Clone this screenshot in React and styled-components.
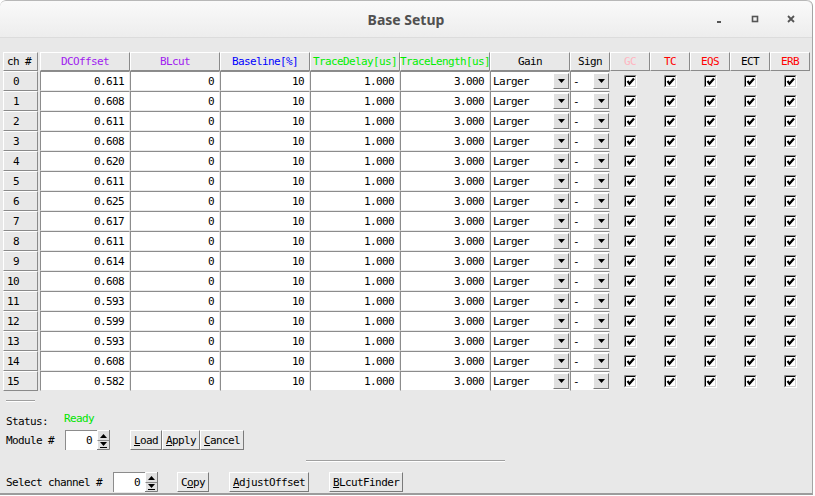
import React from "react";
import styled, { createGlobalStyle } from "styled-components";

const mono = `"DejaVu Sans Mono", "Liberation Mono", monospace`;

const GlobalStyle = createGlobalStyle`
  html, body { margin: 0; padding: 0; background: #ffffff; }
  body { width: 815px; height: 496px; overflow: hidden; }
`;

// window frame
const Window = styled.div`
  width: 813px;
  height: 495px;
  box-sizing: border-box;
  display: flex;
  flex-direction: column;
  background: #e8e8e8;
  border-right: 1px solid #a4a4a4;
  border-bottom: 2px solid #9c9c9c;
  border-radius: 6px 6px 0 0;
  overflow: hidden;
  font-family: ${mono};
  font-size: 11px;
  letter-spacing: -0.62px;
  color: #000;
`;

const TitleBar = styled.div`
  height: 38px;
  flex: none;
  box-sizing: border-box;
  display: grid;
  grid-template-columns: 1fr auto 1fr;
  align-items: center;
  background: linear-gradient(#fafafa, #ededed);
  border-top: 1px solid #b8b8b8;
  border-bottom: 1px solid #dcdcdc;
  border-radius: 6px 6px 0 0;
`;

const Title = styled.div`
  grid-column: 2;
  font-family: "Noto Sans", "Open Sans", sans-serif;
  font-weight: bold;
  font-size: 14px;
  letter-spacing: 0;
  color: #505050;
`;

const Controls = styled.div`
  grid-column: 3;
  justify-self: end;
  display: flex;
  gap: 22px;
  padding-right: 14px;
`;

const Body = styled.div`
  padding: 14px 3px 0 3px;
  display: flex;
  flex-direction: column;
`;

// table
const Grid = styled.div`
  display: grid;
  grid-template-columns: 37px repeat(5, 90px) 80px repeat(6, 40px);
  grid-template-rows: 19px;
  grid-auto-rows: 20px;
`;

const HeadCell = styled.div`
  box-sizing: border-box;
  display: flex;
  align-items: center;
  justify-content: ${(p) => (p.$left ? "flex-start" : "center")};
  padding-left: ${(p) => (p.$left ? "3px" : "0")};
  margin-right: ${(p) => (p.$gap ? "2px" : "0")};
  white-space: pre;
  overflow: visible;
  color: ${(p) => p.$color || "#000"};
  border: 1px solid;
  border-color: #ffffff #8a8a8a #8a8a8a #ffffff;
`;

const Entry = styled.div`
  box-sizing: border-box;
  display: flex;
  align-items: center;
  justify-content: flex-end;
  padding-right: 5px;
  background: #ffffff;
  border-top: 1px solid #8c8c8c;
  border-left: 1px solid #8c8c8c;
  border-right: 1px solid #e8e8e8;
  border-bottom: 1px solid #e8e8e8;
`;

const Combo = styled.div`
  box-sizing: border-box;
  display: flex;
  align-items: stretch;
  background: #ffffff;
  border-top: 1px solid #8c8c8c;
  border-left: 1px solid #8c8c8c;
  border-right: 1px solid #e8e8e8;
  border-bottom: 1px solid #e8e8e8;
`;

const ComboText = styled.div`
  flex: 1;
  display: flex;
  align-items: center;
  padding-left: 2px;
`;

const ArrowButton = styled.div`
  width: 16px;
  box-sizing: border-box;
  margin: 1px 0 1px 0;
  display: flex;
  align-items: center;
  justify-content: center;
  background: #e0e0e0;
  border: 1px solid;
  border-color: #ffffff #7a7a7a #7a7a7a #ffffff;
`;

const CheckCell = styled.div`
  display: flex;
  align-items: center;
  justify-content: center;
`;

// footer
const Footer = styled.div`
  display: flex;
  flex-direction: column;
  padding-left: 6px;
`;

const Rule = styled.div`
  width: ${(p) => p.$width}px;
  margin-top: ${(p) => p.$top}px;
  margin-left: ${(p) => p.$left || 0}px;
  border-top: 1px solid #a0a0a0;
  border-bottom: 1px solid #ffffff;
`;

const Row = styled.div`
  display: flex;
  align-items: ${(p) => p.$align || "center"};
  height: ${(p) => p.$h}px;
  margin-top: ${(p) => p.$top}px;
`;

const Label = styled.span`
  width: ${(p) => p.$width}px;
  flex: none;
  margin-top: ${(p) => p.$shift || 0}px;
  white-space: pre;
`;

const Ready = styled.span`
  color: #00e400;
  margin-top: -3px;
`;

const Spinner = styled.div`
  display: flex;
  height: 20px;
  margin-right: ${(p) => p.$after}px;
`;

const SpinEntry = styled.div`
  width: 32px;
  box-sizing: border-box;
  display: flex;
  align-items: center;
  justify-content: flex-end;
  padding-right: 5px;
  background: #ffffff;
  border-top: 1px solid #8c8c8c;
  border-left: 1px solid #8c8c8c;
`;

const SpinArrows = styled.div`
  width: 13px;
  display: flex;
`;

const ButtonGroup = styled.div`
  display: flex;
`;

const Button = styled.div`
  box-sizing: border-box;
  height: ${(p) => p.$h || 20}px;
  display: flex;
  align-items: center;
  padding: 0 3px;
  margin-right: ${(p) => p.$after || 0}px;
  background: #e8e8e8;
  white-space: pre;
  border: 1px solid;
  border-color: #ffffff #7a7a7a #7a7a7a #ffffff;
`;

const Hot = styled.span`
  text-decoration: underline;
  text-underline-offset: 1px;
`;

const Minimize = () => (
  <svg width="14" height="14" viewBox="0 0 14 14">
    <rect x="5" y="9" width="4" height="2" fill="#555" />
  </svg>
);

const Maximize = () => (
  <svg width="14" height="14" viewBox="0 0 14 14">
    <rect x="4.5" y="4.5" width="5" height="5" fill="none" stroke="#555" strokeWidth="1.6" />
  </svg>
);

const Close = () => (
  <svg width="14" height="14" viewBox="0 0 14 14">
    <path d="M4 4 L10 10 M10 4 L4 10" stroke="#555" strokeWidth="1.8" />
  </svg>
);

const DownArrow = () => (
  <svg width="9" height="6" viewBox="0 0 9 6">
    <path d="M1 1 H8 L4.5 5 Z" fill="#000" />
  </svg>
);

const SpinIcon = () => (
  <svg width="13" height="20" viewBox="0 0 13 20">
    <rect x="0" y="0" width="13" height="20" fill="#e0e0e0" />
    <path d="M0.5 19 V0.5 H12" stroke="#fff" fill="none" />
    <path d="M0.5 10.5 H12.5" stroke="#8a8a8a" />
    <path d="M12.5 0 V19.5 H0" stroke="#7a7a7a" fill="none" />
    <path d="M3 8 H10 L6.5 4 Z" fill="#000" />
    <path d="M3 12 H10 L6.5 16 Z" fill="#000" />
    <path d="M3 17.5 H10" stroke="#000" />
  </svg>
);

const Check = () => (
  <svg width="13" height="13" viewBox="0 0 13 13">
    <rect x="0" y="0" width="13" height="13" fill="#fff" />
    <path d="M0.5 12.5 V0.5 H12.5" stroke="#888" fill="none" />
    <path d="M1.5 11.5 V1.5 H11.5" stroke="#000" fill="none" />
    <path d="M0.5 12.5 H12.5 V0.5" stroke="#fff" fill="none" />
    <path d="M1.5 11.5 H11.5 V1.5" stroke="#d0d0d0" fill="none" />
    <path d="M3.5 6 L5.5 8.8 L10 3.5" stroke="#000" strokeWidth="2.2" fill="none" />
  </svg>
);

const headers = [
  { text: "DCOffset", color: "#a020f0" },
  { text: "BLcut", color: "#a020f0" },
  { text: "Baseline[%]", color: "#0000ff" },
  { text: "TraceDelay[us]", color: "#00ee00" },
  { text: "TraceLength[us]", color: "#00ee00" },
  { text: "Gain" },
  { text: "Sign" },
  { text: "GC", color: "#ffb6c1" },
  { text: "TC", color: "#ff0000" },
  { text: "EQS", color: "#ff0000" },
  { text: "ECT" },
  { text: "ERB", color: "#ff0000" },
];

const offsets = [
  "0.611", "0.608", "0.611", "0.608", "0.620", "0.611", "0.625", "0.617",
  "0.611", "0.614", "0.608", "0.593", "0.599", "0.593", "0.608", "0.582",
];

const ChannelRow = ({ ch, offset }) => (
  <>
    <HeadCell $left $gap>{String(ch).padStart(2, " ")}</HeadCell>
    <Entry>{offset}</Entry>
    <Entry>0</Entry>
    <Entry>10</Entry>
    <Entry>1.000</Entry>
    <Entry>3.000</Entry>
    <Combo>
      <ComboText>Larger</ComboText>
      <ArrowButton><DownArrow /></ArrowButton>
    </Combo>
    <Combo>
      <ComboText>-</ComboText>
      <ArrowButton><DownArrow /></ArrowButton>
    </Combo>
    {[0, 1, 2, 3, 4].map((i) => (
      <CheckCell key={i}><Check /></CheckCell>
    ))}
  </>
);

const NumberSpinner = ({ after }) => (
  <Spinner $after={after}>
    <SpinEntry>0</SpinEntry>
    <SpinArrows><SpinIcon /></SpinArrows>
  </Spinner>
);

export default function App() {
  return (
    <>
      <GlobalStyle />
      <Window>
        <TitleBar>
          <Title>Base Setup</Title>
          <Controls>
            <Minimize />
            <Maximize />
            <Close />
          </Controls>
        </TitleBar>
        <Body>
          <Grid>
            <HeadCell $left $gap>ch #</HeadCell>
            {headers.map((h) => (
              <HeadCell key={h.text} $color={h.color}>{h.text}</HeadCell>
            ))}
            {offsets.map((o, i) => (
              <ChannelRow key={i} ch={i} offset={o} />
            ))}
          </Grid>
        </Body>
        <Footer>
          <Rule $width={29} $top={9} />
          <Row $h={14} $top={13} $align="flex-start">
            <Label $width={58}>Status:</Label>
            <Ready>Ready</Ready>
          </Row>
          <Row $h={20} $top={1}>
            <Label $width={59}>Module #</Label>
            <NumberSpinner after={20} />
            <ButtonGroup>
              <Button><Hot>L</Hot>oad</Button>
              <Button><Hot>A</Hot>pply</Button>
              <Button><Hot>C</Hot>ancel</Button>
            </ButtonGroup>
          </Row>
          <Rule $width={199} $top={10} $left={300} />
          <Row $h={20} $top={10}>
            <Label $width={107}>Select channel #</Label>
            <NumberSpinner after={19} />
            <Button $after={20}>C<Hot>o</Hot>py</Button>
            <Button $after={20}><Hot>A</Hot>djustOffset</Button>
            <Button><Hot>B</Hot>LcutFinder</Button>
          </Row>
        </Footer>
      </Window>
    </>
  );
}
